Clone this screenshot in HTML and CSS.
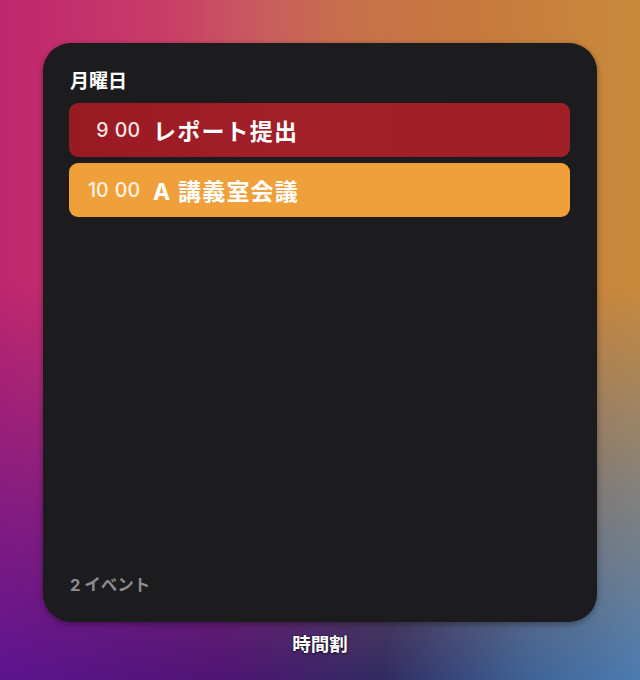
FILE: index.html
```html
<!DOCTYPE html>
<html lang="ja">
<head>
<meta charset="utf-8">
<title>時間割</title>
<link rel="stylesheet" href="styles.css">
</head>
<body>
<div class="stage">
  <div class="widget">
    <div class="day">月曜日</div>
    <div class="events">
      <div class="event red">
        <span class="time">9 00</span>
        <span class="title">レポート提出</span>
      </div>
      <div class="event orange">
        <span class="time">10 00</span>
        <span class="title">A 講義室会議</span>
      </div>
    </div>
    <div class="count">2 イベント</div>
  </div>
  <div class="label">時間割</div>
</div>
</body>
</html>
```
FILE: styles.css
```css
html, body {
  margin: 0;
  padding: 0;
  width: 640px;
  height: 680px;
  overflow: hidden;
}
body {
  position: relative;
  font-family: Inter, "Noto Sans CJK JP", sans-serif;
  background: linear-gradient(to right, #bf266f 0%, #c83c68 25%, #c95e5e 42%, #c8704a 55%, #c77a3e 75%, #c98a3c 100%);
}
body::before {
  content: "";
  position: absolute;
  inset: 0;
  background: linear-gradient(to right, #5c148f 0%, #4e1474 35%, #302c62 60%, #3e6296 82%, #4b7bb2 100%);
  -webkit-mask-image: linear-gradient(to bottom, transparent 0%, transparent 42%, rgba(0,0,0,0.55) 72%, #000 100%);
  mask-image: linear-gradient(to bottom, transparent 0%, transparent 42%, rgba(0,0,0,0.55) 72%, #000 100%);
}
.stage {
  position: relative;
  display: flex;
  flex-direction: column;
  align-items: center;
  padding-top: 43px;
}
.widget {
  width: 554px;
  height: 579px;
  box-sizing: border-box;
  background: #1c1c1e;
  border-radius: 28px;
  padding: 28px 27px 27px 26px;
  display: flex;
  flex-direction: column;
  box-shadow: 0 2px 6px rgba(0,0,0,0.35);
}
.day {
  color: #ffffff;
  font-size: 19px;
  font-weight: 700;
  line-height: 22px;
  padding-left: 1px;
}
.events {
  margin-top: 10px;
  display: flex;
  flex-direction: column;
  gap: 6px;
}
.event {
  height: 54px;
  border-radius: 9px;
  display: flex;
  align-items: center;
}
.red {
  background: linear-gradient(to right, #981a22, #a21f28 40%, #9f1f27);
}
.orange {
  background: #f0a03a;
}
.time {
  width: 71px;
  text-align: right;
  font-size: 19.5px;
  font-weight: 500;
  word-spacing: 1px;
  margin-right: 13px;
}
.red .time { color: #f6e6e4; }
.orange .time { color: #fff4e2; }
.title {
  color: #ffffff;
  font-size: 23px;
  font-weight: 700;
  letter-spacing: 1.2px;
}
.count {
  margin-top: auto;
  color: #8c8c90;
  font-size: 16.5px;
  font-weight: 700;
  line-height: 20px;
  padding-left: 1px;
}
.label {
  margin-top: 11px;
  color: #ffffff;
  font-size: 18.5px;
  font-weight: 700;
  line-height: 22px;
  text-shadow: 0 0 2px rgba(0,0,0,0.7), 0 1px 2px rgba(0,0,0,0.5);
}
```
